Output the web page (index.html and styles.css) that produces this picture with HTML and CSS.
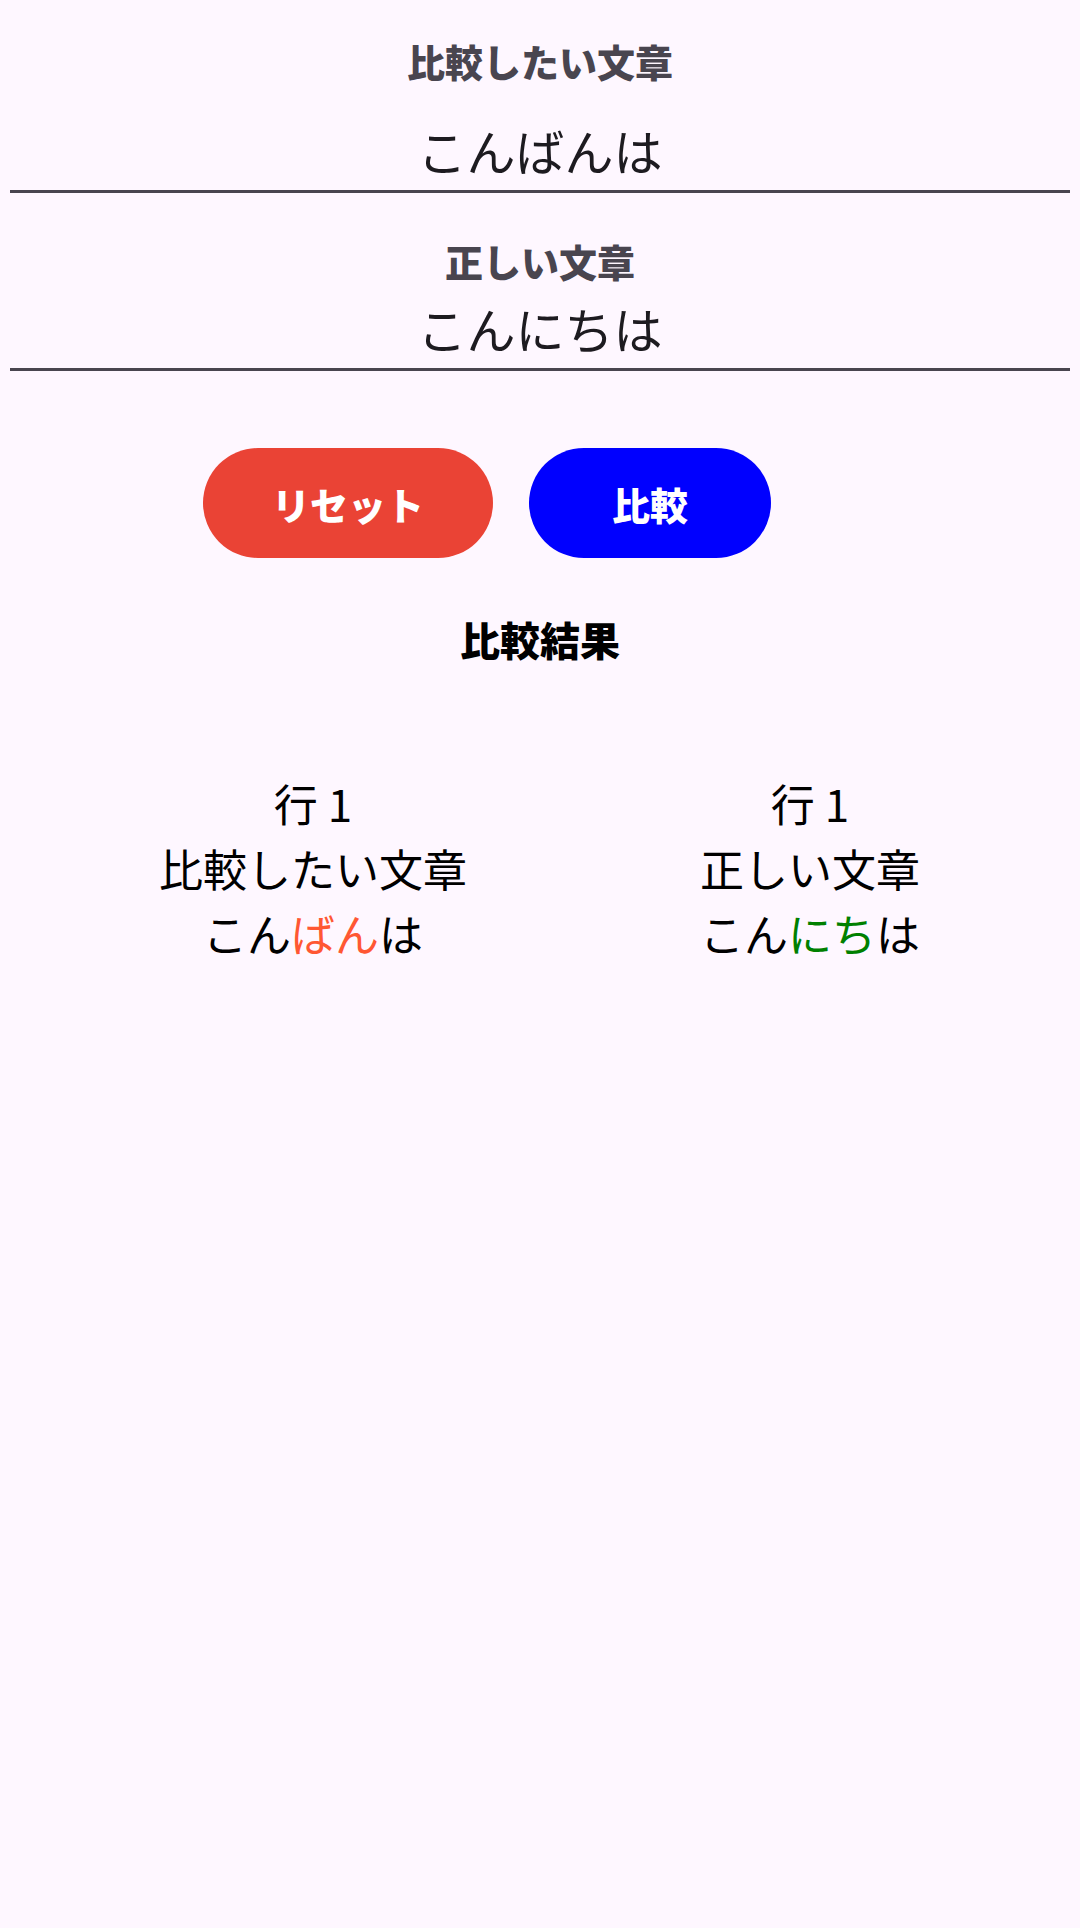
FILE: index.html
```html
<!DOCTYPE html>
<html lang="ja">
<head>
<meta charset="utf-8">
<link rel="stylesheet" href="styles.css">
</head>
<body>
<div class="page">
  <div class="field field-first">
    <div class="label">比較したい文章</div>
    <div class="input">こんばんは</div>
  </div>
  <div class="field field-second">
    <div class="label">正しい文章</div>
    <div class="input input-second">こんにちは</div>
  </div>
  <div class="buttons">
    <button class="btn btn-reset">リセット</button>
    <button class="btn btn-compare">比較</button>
  </div>
  <div class="result-title">比較結果</div>
  <div class="results">
    <div class="col">
      <div>行 1</div>
      <div>比較したい文章</div>
      <div>こん<span class="diff-red">ばん</span>は</div>
    </div>
    <div class="col">
      <div>行 1</div>
      <div>正しい文章</div>
      <div>こん<span class="diff-green">にち</span>は</div>
    </div>
  </div>
</div>
</body>
</html>
```
FILE: styles.css
```css
html, body {
  margin: 0;
  padding: 0;
  background: #FEF7FF;
}
body {
  width: 1080px;
  height: 1928px;
  font-family: "Noto Sans CJK JP", "Noto Sans", sans-serif;
  color: #1D1B20;
}
.page {
  display: flex;
  flex-direction: column;
  padding: 0 10px;
}
.field {
  display: flex;
  flex-direction: column;
  align-items: center;
  border-bottom: 3px solid #49454F;
  padding-bottom: 10px;
}
.field-first {
  padding-top: 36px;
}
.field-second {
  padding-top: 43px;
}
.label {
  font-size: 38px;
  line-height: 50px;
  font-weight: 900;
  color: #49454F;
}
.input {
  font-size: 49px;
  line-height: 60px;
  margin-top: 34px;
  color: #1D1B20;
}
.input-second {
  margin-top: 12px;
}
.buttons {
  display: flex;
  gap: 36px;
  margin-top: 77px;
  padding-left: 193px;
}
.btn {
  height: 110px;
  border: none;
  border-radius: 55px;
  color: #FFFFFF;
  font-family: "Noto Sans CJK JP", sans-serif;
  font-size: 38px;
  font-weight: 900;
  padding: 0;
  display: flex;
  align-items: center;
  justify-content: center;
}
.btn-reset {
  width: 290px;
  background: #EA4335;
}
.btn-compare {
  width: 242px;
  background: #0000FF;
}
.result-title {
  text-align: center;
  font-size: 40px;
  line-height: 52px;
  font-weight: 900;
  color: #000000;
  margin-top: 55px;
}
.results {
  display: grid;
  grid-template-columns: 400px 400px;
  column-gap: 97px;
  padding-left: 103px;
  margin-top: 106px;
}
.col {
  display: flex;
  flex-direction: column;
  align-items: center;
  font-size: 44px;
  line-height: 65px;
  color: #000000;
}
.diff-red {
  color: #FF5733;
}
.diff-green {
  color: #008000;
}
```
